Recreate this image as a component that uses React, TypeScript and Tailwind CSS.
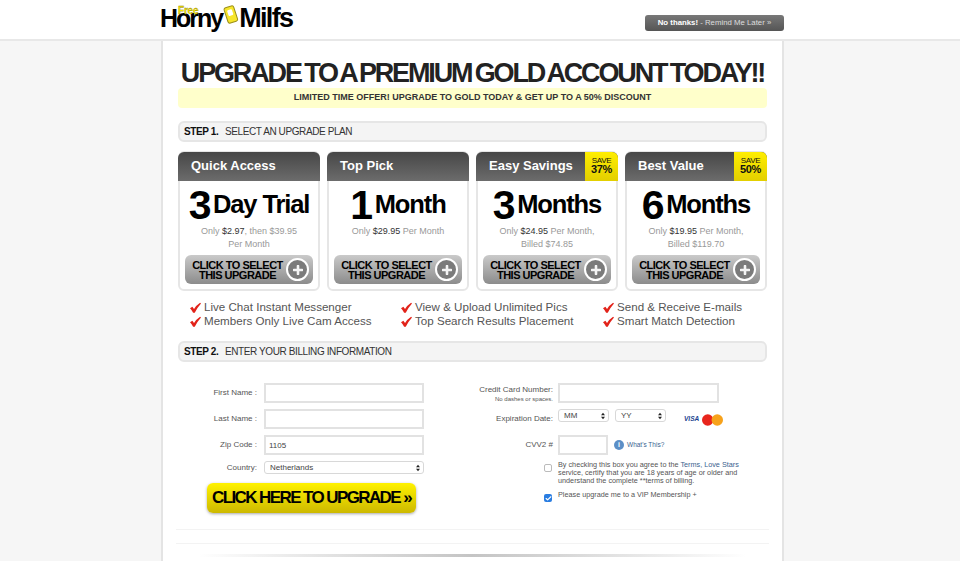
import React from 'react';
import { Check } from 'lucide-react';

const plans = [
  { title: 'Quick Access', num: '3', unit: 'Day Trial', price: '$2.97', rest: ', then $39.95', line2: 'Per Month' },
  { title: 'Top Pick', num: '1', unit: 'Month', price: '$29.95', rest: ' Per Month', line2: '' },
  { title: 'Easy Savings', num: '3', unit: 'Months', price: '$24.95', rest: ' Per Month,', line2: 'Billed $74.85', save: '37%' },
  { title: 'Best Value', num: '6', unit: 'Months', price: '$19.95', rest: ' Per Month,', line2: 'Billed $119.70', save: '50%' },
];

function Tick() {
  return (
    <svg viewBox="0 0 12 12" className="w-[11px] h-[11px] shrink-0">
      <path d="M0 6.8 L2.6 5.2 L4.4 7.6 Q7 3.4 11 0.8 L12 1.6 Q8 6 5.2 11.8 L3.4 11.8 Q2.4 9.2 0 6.8 Z" fill="#e2231a" />
    </svg>
  );
}

function Feature({ text }: { text: string }) {
  return (
    <div className="flex items-center gap-[3px] h-[14px] text-[11.6px] text-[#555] whitespace-nowrap">
      <Tick />
      <span>{text}</span>
    </div>
  );
}

function StepBar({ step, text }: { step: string; text: string }) {
  return (
    <div className="h-[21px] rounded-md border-2 border-[#e6e6e6] bg-[#f4f4f4] flex items-center px-[4px] text-[10px] tracking-[-0.4px] text-[#333]">
      <b className="text-[#111] w-[41px] whitespace-nowrap">{step}</b>
      <span>{text}</span>
    </div>
  );
}

function PlanCard({ plan }: { plan: (typeof plans)[number] }) {
  return (
    <div className="w-[142px] h-[140px] rounded-md border-2 border-[#e6e6e6] bg-white flex flex-col -mt-px">
      <div className="h-[29px] -mx-[2px] -mt-px flex rounded-t-md bg-gradient-to-b from-[#474747] to-[#6c6c6c] overflow-hidden">
        <span className="flex-1 pl-[13px] pt-[6px] text-[13px] leading-[15px] font-bold text-white whitespace-nowrap">{plan.title}</span>
        {plan.save && (
          <span className="w-[33px] pt-[5px] bg-gradient-to-b from-[#ffee00] to-[#e3cf00] text-center text-[#111]">
            <span className="block text-[8px] leading-[8px] tracking-[-0.3px]">SAVE</span>
            <span className="block text-[11px] leading-[9px] font-bold tracking-[-0.4px]">{plan.save}</span>
          </span>
        )}
      </div>
      <div className="h-[44px] flex items-center justify-center text-black font-bold whitespace-nowrap">
        <span className="text-[41px] leading-none tracking-[-1.5px] mr-[3px] mt-[4px]">{plan.num}</span>
        <span className="text-[25.5px] leading-none tracking-[-1.1px] mt-[3px]">{plan.unit}</span>
      </div>
      <div className="h-[28px] text-[9px] leading-[13px] text-[#999] text-center">
        Only <span className="text-[#333]">{plan.price}</span>
        {plan.rest}
        <br />
        {plan.line2}
      </div>
      <div className="mx-[5px] mt-[2px] h-[29px] rounded-md bg-gradient-to-b from-[#cacaca] to-[#8c8c8c] flex items-center pl-[4px] pr-[4px]">
        <span className="flex-1 text-center text-[11px] leading-[10px] font-bold tracking-[-0.5px] text-black">
          CLICK TO SELECT
          <br />
          THIS UPGRADE
        </span>
        <span className="w-[23px] h-[23px] rounded-full border-2 border-white bg-[#7b7b7b] flex items-center justify-center">
          <svg viewBox="0 0 10 10" className="w-[10px] h-[10px]">
            <path d="M5 1 V9 M1 5 H9" stroke="#f4f4f4" strokeWidth="2.6" strokeLinecap="round" />
          </svg>
        </span>
      </div>
    </div>
  );
}

function Field({ label, value = '' }: { label: string; value?: string }) {
  return (
    <div className="flex items-center h-[20px] mb-[6px]">
      <span className="w-[80px] mr-[7px] text-right text-[8px] text-[#555]">{label}</span>
      <input readOnly value={value} className="w-[160px] h-[20px] border-2 border-[#e2e2e2] bg-white pl-[3px] text-[8px] text-[#444] outline-none" />
    </div>
  );
}

function FakeSelect({ value, className }: { value: string; className: string }) {
  return (
    <div className={`h-[13px] rounded-[3px] border border-[#d8d8d8] bg-white flex items-center justify-between pl-[5px] pr-[3px] text-[8px] text-[#444] ${className}`}>
      <span>{value}</span>
      <svg viewBox="0 0 6 10" className="w-[4px] h-[8px]">
        <path d="M3 0 L6 4 H0 Z M3 10 L0 6 H6 Z" fill="#222" />
      </svg>
    </div>
  );
}

export default function App() {
  return (
    <div className="w-[960px] h-[561px] overflow-hidden bg-[#f6f6f6] font-['Liberation_Sans',Arial,sans-serif]">
      {/* Top bar */}
      <header className="h-[41px] bg-white border-b-2 border-[#e8e8e8]">
        <div className="w-[945px]">
          <div className="w-[623px] mx-auto flex items-start justify-between">
            <div className="relative mt-[5px] -ml-px flex items-center font-bold text-black text-[27px] leading-[27px] whitespace-nowrap">
              <span className="absolute left-[18px] top-[1px] text-[10px] leading-none tracking-[-0.2px] text-[#f7e600] [-webkit-text-stroke:0.3px_#8a7d00]">Free</span>
              <span className="text-[25px] tracking-[-2px]">Horny</span>
              <svg viewBox="0 0 16 20" className="w-[16px] h-[20px] ml-[1px] -mt-[7px]">
                <rect x="3" y="1.5" width="10" height="16" rx="2" transform="rotate(-18 8 10)" fill="#f7e62b" stroke="#9a8f1a" />
                <rect x="5.5" y="4.5" width="5" height="6" rx="1" transform="rotate(-18 8 10)" fill="#fff" />
              </svg>
              <span className="tracking-[-1.7px]">Milfs</span>
            </div>
            <div className="mt-[15px] w-[139px] h-[16px] rounded-[3px] bg-gradient-to-b from-[#787878] to-[#555] flex items-center justify-center text-[7.8px] text-[#ddd] whitespace-nowrap">
              <b className="text-white">No thanks!</b>&nbsp;- Remind Me Later »
            </div>
          </div>
        </div>
      </header>

      {/* Main panel */}
      <div className="w-[945px]">
        <main className="w-[623px] h-[520px] mx-auto bg-white border-x-2 border-[#e4e4e4] pt-[17px] px-[15px]">
          <h1 className="h-[30px] text-center text-[27px] leading-[30px] font-bold tracking-[-2.15px] [word-spacing:-2px] text-[#222] whitespace-nowrap">
            UPGRADE TO A PREMIUM GOLD ACCOUNT TODAY!!
          </h1>
          <div className="h-[20px] rounded-sm bg-[#ffffcb] flex items-center justify-center text-[9px] font-bold text-[#333]">
            LIMITED TIME OFFER! UPGRADE TO GOLD TODAY &amp; GET UP TO A 50% DISCOUNT
          </div>

          <div className="mt-[13px]">
            <StepBar step="STEP 1." text="SELECT AN UPGRADE PLAN" />
          </div>

          <div className="mt-[10px] flex justify-between">
            {plans.map((p) => (
              <PlanCard key={p.title} plan={p} />
            ))}
          </div>

          {/* Feature list */}
          <div className="mt-[9px] ml-[12px] flex">
            <div className="w-[211px]">
              <Feature text="Live Chat Instant Messenger" />
              <Feature text="Members Only Live Cam Access" />
            </div>
            <div className="w-[202px]">
              <Feature text="View & Upload Unlimited Pics" />
              <Feature text="Top Search Results Placement" />
            </div>
            <div>
              <Feature text="Send & Receive E-mails" />
              <Feature text="Smart Match Detection" />
            </div>
          </div>

          <div className="mt-[13px]">
            <StepBar step="STEP 2." text="ENTER YOUR BILLING INFORMATION" />
          </div>

          {/* Billing form */}
          <div className="mt-[21px] flex">
            <div className="ml-[-1px] w-[300px]">
              <Field label="First Name :" />
              <Field label="Last Name :" />
              <Field label="Zip Code :" value="1105" />
              <div className="flex items-center h-[13px]">
                <span className="w-[80px] mr-[7px] text-right text-[8px] text-[#555]">Country:</span>
                <FakeSelect value="Netherlands" className="w-[160px]" />
              </div>
              <div className="ml-[30px] mt-[9px] w-[209px] h-[30px] rounded-md bg-gradient-to-b from-[#fff200] to-[#cdb900] shadow-[0_1px_3px_rgba(0,0,0,0.35)] flex items-center justify-center text-[17px] font-bold tracking-[-1.6px] text-black whitespace-nowrap">
                CLICK HERE TO UPGRADE »
              </div>
            </div>

            <div className="flex-1">
              <div className="flex items-start h-[20px] mb-[6px]">
                <div className="w-[76px] mr-[5px] text-right pt-[1px] text-[#555]">
                  <div className="text-[8px] leading-[11px] whitespace-nowrap">Credit Card Number:</div>
                  <div className="text-[6px] leading-[8px] whitespace-nowrap">No dashes or spaces.</div>
                </div>
                <input readOnly className="w-[161px] h-[20px] border-2 border-[#e2e2e2] bg-white outline-none" />
              </div>
              <div className="flex items-center h-[20px] mb-[6px]">
                <span className="w-[76px] mr-[5px] text-right text-[8px] text-[#555]">Expiration Date:</span>
                <FakeSelect value="MM" className="w-[51px] -mt-[7px]" />
                <FakeSelect value="YY" className="w-[51px] ml-[6px] -mt-[7px]" />
                <span className="ml-[18px] text-[6.5px] font-bold italic text-[#1a3f8f]">VISA</span>
                <svg viewBox="0 0 22 12" className="w-[21px] h-[12px] ml-[3px] mt-[2px]">
                  <circle cx="6" cy="6" r="6" fill="#e8251c" />
                  <circle cx="16" cy="6" r="6" fill="#f7a21b" />
                </svg>
              </div>
              <div className="flex items-center h-[20px] mb-[5px]">
                <span className="w-[76px] mr-[5px] text-right text-[8px] text-[#555]">CVV2 #</span>
                <input readOnly className="w-[50px] h-[20px] border-2 border-[#e2e2e2] bg-white outline-none" />
                <span className="ml-[6px] w-[10px] h-[10px] rounded-full bg-[#5b8fc7] flex items-center justify-center text-[7px] font-bold text-white">i</span>
                <span className="ml-[3px] text-[6.5px] text-[#3a5f8f]">What's This?</span>
              </div>
              <div className="flex items-start ml-[67px]">
                <span className="mt-[4px] w-[8px] h-[8px] rounded-[2px] border border-[#bbb] bg-white shrink-0" />
                <p className="ml-[6px] mt-[1px] text-[7.25px] leading-[8px] text-[#555] whitespace-nowrap">
                  By checking this box you agree to the <span className="text-[#3a5f8f]">Terms, Love Stars</span>
                  <br />
                  service, certify that you are 18 years of age or older and
                  <br />
                  understand the complete **terms of billing.
                </p>
              </div>
              <div className="flex items-start ml-[67px] mt-[5px]">
                <span className="mt-[4px] w-[8px] h-[8px] rounded-[2px] bg-[#2a7de1] flex items-center justify-center shrink-0">
                  <Check className="w-[7px] h-[7px] text-white" strokeWidth={4} />
                </span>
                <p className="ml-[6px] mt-[1px] text-[7.25px] leading-[8px] text-[#555]">Please upgrade me to a VIP Membership +</p>
              </div>
            </div>
          </div>

          {/* Footer rules */}
          <div className="mt-[16px] -mx-[2px] border-t border-[#f3f3f3]" />
          <div className="mt-[13px] -mx-[2px] border-t border-[#f3f3f3]" />
          <div className="mt-[10px] mx-[20px] h-[3px] rounded-full bg-gradient-to-r from-white via-[#c4c4c4] to-white" />
        </main>
      </div>
    </div>
  );
}
